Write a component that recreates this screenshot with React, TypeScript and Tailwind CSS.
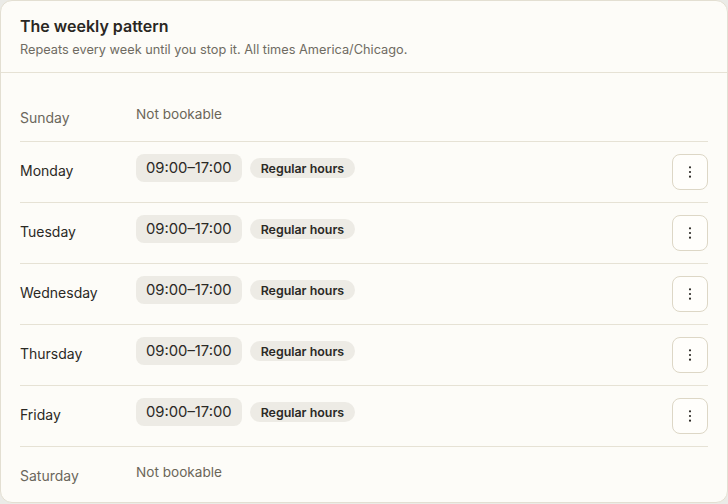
import React from "react";

type Day = { name: string; bookable: boolean };

const days: Day[] = [
  { name: "Sunday", bookable: false },
  { name: "Monday", bookable: true },
  { name: "Tuesday", bookable: true },
  { name: "Wednesday", bookable: true },
  { name: "Thursday", bookable: true },
  { name: "Friday", bookable: true },
  { name: "Saturday", bookable: false },
];

function Dots() {
  return (
    <svg width="16" height="16" viewBox="0 0 24 24" fill="#2b2925" stroke="none">
      <circle cx="12" cy="5" r="1.6" />
      <circle cx="12" cy="12" r="1.6" />
      <circle cx="12" cy="19" r="1.6" />
    </svg>
  );
}

export default function App() {
  return (
    <div
      className="w-[728px] h-[504px] overflow-hidden bg-[#ebebe7]"
      style={{ fontFamily: "Inter, 'Noto Sans', sans-serif" }}
    >
      <div className="w-[728px] rounded-xl border border-[#e3dfd2] bg-[#fdfcf8]">
        <div className="px-[19px] pt-[13px] pb-3 border-b border-[#e6e2d5]">
          <div className="text-[16px] leading-6 font-semibold text-[#2a2723]">The weekly pattern</div>
          <div className="mt-0.5 text-[12.75px] leading-5 text-[#6f6b62]">
            Repeats every week until you stop it. All times America/Chicago.
          </div>
        </div>
        <div className="px-[19px] pt-4 pb-[3px]">
          {days.map((d, i) => (
            <div
              key={d.name}
              className={
                "flex items-start py-3 " +
                (i < days.length - 1 ? "border-b border-[#e6e2d5]" : "")
              }
            >
              <div
                className={
                  "w-[116px] h-7 shrink-0 pt-[5px] text-[14px] leading-6 " +
                  (d.bookable ? "text-[#2b2925]" : "text-[#6b675c]")
                }
              >
                {d.name}
              </div>
              {d.bookable ? (
                <>
                  <div className="flex items-center gap-2">
                    <span className="h-7 px-2.5 pt-px rounded-lg bg-[#edebe5] text-[14.8px] leading-[27px] text-[#2b2925]">
                      09:00–17:00
                    </span>
                    <span className="h-5 px-[11px] pt-px rounded-full bg-[#edebe5] text-[12.4px] leading-[19px] font-semibold text-[#2b2925]">
                      Regular hours
                    </span>
                  </div>
                  <button className="ml-auto w-9 h-9 rounded-lg border border-[#ddd7c6] bg-[#fffefb] flex items-center justify-center">
                    <Dots />
                  </button>
                </>
              ) : (
                <div className="pt-px text-[13.6px] leading-6 text-[#6b6658]">Not bookable</div>
              )}
            </div>
          ))}
        </div>
      </div>
    </div>
  );
}
